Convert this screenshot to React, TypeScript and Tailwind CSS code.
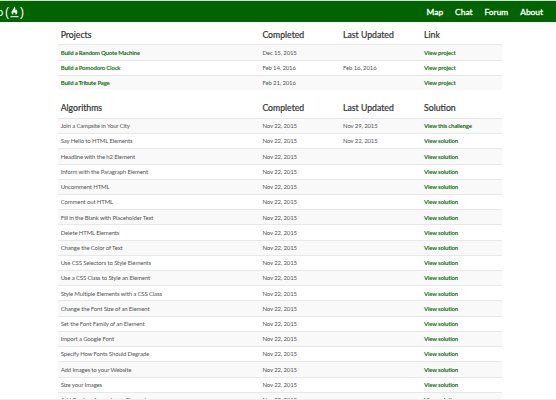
type Row = { name: string; completed: string; updated?: string; link: string };

const projects: Row[] = [
  { name: "Build a Random Quote Machine", completed: "Dec 15, 2015", link: "View project" },
  { name: "Build a Pomodoro Clock", completed: "Feb 14, 2016", updated: "Feb 16, 2016", link: "View project" },
  { name: "Build a Tribute Page", completed: "Feb 21, 2016", link: "View project" },
];

const solved = (name: string, updated?: string): Row => ({
  name,
  completed: "Nov 22, 2015",
  updated,
  link: "View solution",
});

const algorithms: Row[] = [
  { name: "Join a Campsite in Your City", completed: "Nov 22, 2015", updated: "Nov 29, 2015", link: "View this challenge" },
  solved("Say Hello to HTML Elements", "Nov 22, 2015"),
  solved("Headline with the h2 Element"),
  solved("Inform with the Paragraph Element"),
  solved("Uncomment HTML"),
  solved("Comment out HTML"),
  solved("Fill in the Blank with Placeholder Text"),
  solved("Delete HTML Elements"),
  solved("Change the Color of Text"),
  solved("Use CSS Selectors to Style Elements"),
  solved("Use a CSS Class to Style an Element"),
  solved("Style Multiple Elements with a CSS Class"),
  solved("Change the Font Size of an Element"),
  solved("Set the Font Family of an Element"),
  solved("Import a Google Font"),
  solved("Specify How Fonts Should Degrade"),
  solved("Add Images to your Website"),
  solved("Size your Images"),
  solved("Add Borders Around your Elements"),
];

const columns = "grid grid-cols-[201.7px_80.7px_81px_1fr] pl-[2.7px]";

function Section({ title, last, rows, linked }: { title: string; last: string; rows: Row[]; linked?: boolean }) {
  return (
    <section>
      <div className={`${columns} h-[18px] items-center text-[8.7px] leading-none text-[#333] [-webkit-text-stroke:0.2px_#333]`}>
        <span>{title}</span>
        <span>Completed</span>
        <span>Last Updated</span>
        <span>{last}</span>
      </div>
      {rows.map((row) => (
        <div
          key={row.name}
          className={`${columns} h-[15.22px] items-center whitespace-nowrap border-t border-[#e8e8e8] pt-[0.5px] text-[6px] leading-none text-[#555] odd:bg-white even:bg-[#f9f9f9]`}
        >
          <span className={linked ? "font-bold tracking-[-0.2px] text-[#0a700a]" : "tracking-[-0.14px]"}>{row.name}</span>
          <span className="tracking-[-0.13px]">{row.completed}</span>
          <span className="tracking-[-0.13px]">{row.updated}</span>
          <span className="font-bold tracking-[-0.2px] text-[#0a700a]">{row.link}</span>
        </div>
      ))}
    </section>
  );
}

export default function App() {
  return (
    <div className="flex h-[400px] w-[556px] flex-col overflow-hidden border-t border-[#d5dcd5] bg-white font-['Lato',sans-serif]">
      <header className="flex h-[21px] shrink-0 items-center justify-between bg-[#006400] pr-[13px] text-white">
        <div className="-ml-[3px] flex items-center text-[12px] leading-none">
          <span className="w-[8px] text-[11px]">o</span>
          <span className="font-['Liberation_Sans',sans-serif] text-[12px]">(</span>
          <svg className="mx-[1px] h-[12px] w-[9px]" viewBox="0 0 9 12" fill="none">
            <path
              d="M4 0.5C5.8 2 5 3.3 5.6 4.2C6.1 4.4 6.2 3.8 6.1 3.2C7.6 4.6 8 7.4 5.6 9C6 7.8 5.4 7.2 4.8 6.4C4.7 7.3 4.1 7.1 4.3 6C3.2 6.7 2.8 8 3.4 9C1.4 8 .9 6.3 2.4 4.5C3.5 3.2 4.1 2.2 4 .5Z"
              fill="currentColor"
            />
            <path d="M0.5 10.7H8.5" stroke="currentColor" />
          </svg>
          <span className="font-['Liberation_Sans',sans-serif] text-[12px]">)</span>
        </div>
        <nav className="flex gap-[12px] pt-[2px] text-[8.4px] leading-none [-webkit-text-stroke:0.3px_white]">
          <span>Map</span>
          <span>Chat</span>
          <span>Forum</span>
          <span>About</span>
        </nav>
      </header>
      <main className="ml-[58px] flex min-h-0 w-[444px] flex-1 flex-col gap-[9.8px] overflow-hidden pt-[4.4px]">
        <Section title="Projects" last="Link" rows={projects} linked />
        <Section title="Algorithms" last="Solution" rows={algorithms} />
      </main>
      <footer className="h-[1.5px] shrink-0 bg-[#ececec]" />
    </div>
  );
}
